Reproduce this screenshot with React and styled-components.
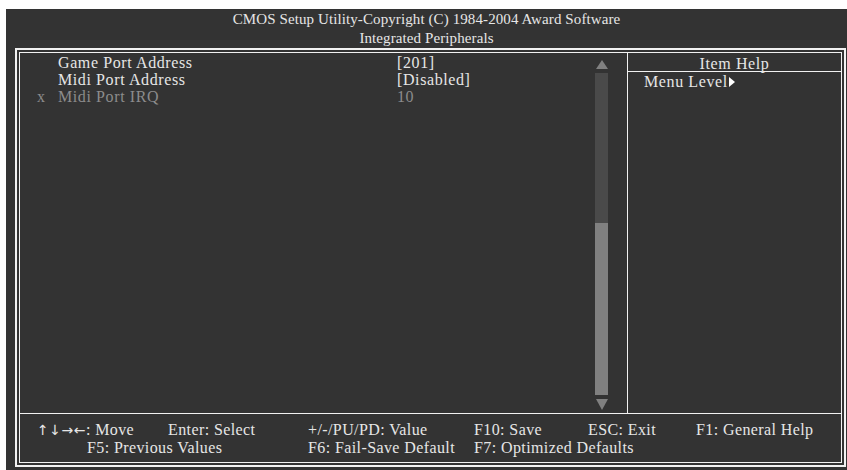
import React from "react";
import styled, { createGlobalStyle } from "styled-components";

const GlobalStyle = createGlobalStyle`
  html, body {
    margin: 0;
    padding: 0;
    background: #ffffff;
  }
  #root {
    padding: 9px 0 0 6px;
  }
`;

const Screen = styled.div`
  width: 841px;
  height: 461px;
  background: #333333;
  color: #e6e6e6;
  font-family: "Liberation Serif", "Times New Roman", serif;
  font-size: 16px;
  letter-spacing: 0.6px;
  display: flex;
  flex-direction: column;
`;

const Header = styled.div`
  height: 39px;
  padding-top: 1px;
  box-sizing: border-box;
  text-align: center;
  font-size: 15px;
  line-height: 19px;
  letter-spacing: 0.1px;
`;

const Frame = styled.div`
  margin-left: 9px;
  width: 831px;
  height: 419px;
  box-sizing: border-box;
  border: 2px solid #f2f2f2;
  padding: 2px;
  display: flex;
`;

const Inner = styled.div`
  flex: 1;
  border: 1px solid #f2f2f2;
  display: flex;
  flex-direction: column;
`;

const Main = styled.div`
  flex: 1;
  display: flex;
  border-bottom: 1px solid #f2f2f2;
`;

const ListPane = styled.div`
  flex: 1;
  display: flex;
`;

const List = styled.div`
  flex: 1;
  padding: 1px 0 0 17px;
  display: grid;
  grid-template-columns: 21px 339px 1fr;
  grid-auto-rows: 17px;
  align-content: start;
  line-height: 17px;
`;

const Cell = styled.div`
  color: ${(p) => (p.$disabled ? "#8c8c8c" : "#e6e6e6")};
  white-space: nowrap;
`;

const Scroll = styled.div`
  width: 13px;
  margin-right: 19px;
  padding: 7px 0 3px;
  display: flex;
  flex-direction: column;
  align-items: center;
  gap: 4px;
`;

const Arrow = styled.div`
  width: 0;
  height: 0;
  border-left: 6px solid transparent;
  border-right: 6px solid transparent;
  ${(p) =>
    p.$down
      ? "border-top: 11px solid #808080;"
      : "border-bottom: 9px solid #808080;"}
`;

const Track = styled.div`
  flex: 1;
  width: 13px;
  background: #4a4a4a;
  display: flex;
  flex-direction: column;
  justify-content: flex-end;
`;

const Thumb = styled.div`
  height: 172px;
  background: #808080;
`;

const HelpPane = styled.div`
  width: 213px;
  border-left: 1px solid #f2f2f2;
  display: flex;
  flex-direction: column;
`;

const HelpTitle = styled.div`
  height: 18px;
  border-bottom: 1px solid #f2f2f2;
  text-align: center;
  line-height: 21px;
`;

const HelpText = styled.div`
  padding: 1px 0 0 16px;
  line-height: 17px;
`;

const Tri = styled.span`
  display: inline-block;
  width: 0;
  height: 0;
  border-top: 5px solid transparent;
  border-bottom: 5px solid transparent;
  border-left: 6px solid #ffffff;
  margin-left: 1px;
  vertical-align: 0px;
`;

const Footer = styled.div`
  height: 48px;
  box-sizing: border-box;
  padding: 7px 0 0 17px;
  display: grid;
  grid-template-columns: 131px 140px 166px 114px 108px 1fr;
  grid-auto-rows: 18px;
  line-height: 18px;
  letter-spacing: 0.4px;
`;

const Key = styled.div`
  white-space: nowrap;
  grid-column: ${(p) => p.$span || "auto"};
  padding-left: ${(p) => p.$indent || 0}px;
`;

const Arrows = styled.span`
  font-family: "DejaVu Sans", sans-serif;
  font-size: 14px;
  letter-spacing: 0.5px;
`;

const rows = [
  { mark: "", label: "Game Port Address", value: "[201]" },
  { mark: "", label: "Midi Port Address", value: "[Disabled]" },
  { mark: "x", label: "Midi Port IRQ", value: "10", disabled: true },
];

export default function App() {
  return (
    <>
      <GlobalStyle />
      <Screen>
        <Header>
          <div>CMOS Setup Utility-Copyright (C) 1984-2004 Award Software</div>
          <div>Integrated Peripherals</div>
        </Header>
        <Frame>
          <Inner>
            <Main>
              <ListPane>
                <List>
                  {rows.map((r) => (
                    <React.Fragment key={r.label}>
                      <Cell $disabled={r.disabled}>{r.mark}</Cell>
                      <Cell $disabled={r.disabled}>{r.label}</Cell>
                      <Cell $disabled={r.disabled}>{r.value}</Cell>
                    </React.Fragment>
                  ))}
                </List>
                <Scroll>
                  <Arrow />
                  <Track>
                    <Thumb />
                  </Track>
                  <Arrow $down />
                </Scroll>
              </ListPane>
              <HelpPane>
                <HelpTitle>Item Help</HelpTitle>
                <HelpText>
                  Menu Level<Tri />
                </HelpText>
              </HelpPane>
            </Main>
            <Footer>
              <Key>
                <Arrows>↑↓→←</Arrows>: Move
              </Key>
              <Key>Enter: Select</Key>
              <Key>+/-/PU/PD: Value</Key>
              <Key>F10: Save</Key>
              <Key>ESC: Exit</Key>
              <Key>F1: General Help</Key>
              <Key $span="1 / span 2" $indent={50}>F5: Previous Values</Key>
              <Key>F6: Fail-Save Default</Key>
              <Key $span="4 / span 3">F7: Optimized Defaults</Key>
            </Footer>
          </Inner>
        </Frame>
      </Screen>
    </>
  );
}
